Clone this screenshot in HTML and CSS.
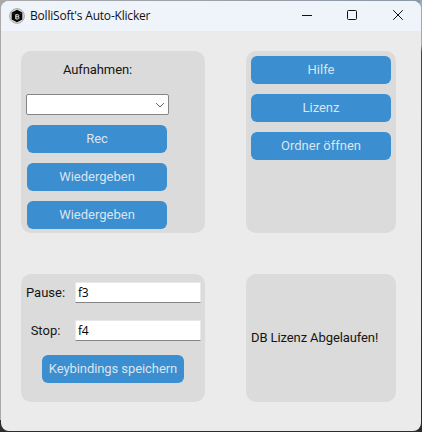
FILE: index.html
```
<!DOCTYPE html>
<html lang="de">
<head>
<meta charset="utf-8">
<title>BolliSoft's Auto-Klicker</title>
<link rel="stylesheet" href="styles.css">
</head>
<body>
<div class="window">
  <header class="titlebar">
    <svg class="logo" width="16" height="16" viewBox="0 0 16 16">
      <circle cx="8" cy="8" r="7.4" fill="#d9d9d9" stroke="#aaa" stroke-width="1"/>
      <path d="M8 1.8 13.3 4.6V11.4L8 14.2 2.7 11.4V4.6Z" fill="#050505"/>
      <path d="M3 5 8 7 13 5" fill="none" stroke="#444" stroke-width=".5"/>
      <path d="M6.8 6.7V11H8.7C10.5 11 10.4 8.9 9 8.8 10.2 8.5 10.1 6.7 8.7 6.7ZM6.8 8.8H9" fill="none" stroke="#eee" stroke-width="1"/>
    </svg>
    <h1 class="title">BolliSoft's Auto-Klicker</h1>
    <svg class="controls" width="112" height="30" viewBox="0 0 112 30" fill="none" stroke="#111" stroke-width="1">
      <path d="M2 14.5H12"/>
      <rect x="47.5" y="9.5" width="9" height="9" rx="1"/>
      <path d="M93.2 9.2 102.8 18.8M102.8 9.2 93.2 18.8"/>
    </svg>
  </header>
  <main class="content">
    <section class="panel recordings">
      <div class="heading">Aufnahmen:</div>
      <div class="combo">
        <svg width="10" height="6" viewBox="0 0 10 6"><path d="M1 1 5 5 9 1" fill="none" stroke="#666" stroke-width="1"/></svg>
      </div>
      <button class="btn">Rec</button>
      <button class="btn">Wiedergeben</button>
      <button class="btn">Wiedergeben</button>
    </section>
    <section class="panel actions">
      <button class="btn">Hilfe</button>
      <button class="btn">Lizenz</button>
      <button class="btn">Ordner öffnen</button>
    </section>
    <section class="panel keys">
      <label class="row"><span class="label">Pause:</span><input class="field" value="f3"></label>
      <label class="row"><span class="label">Stop:</span><input class="field" value="f4"></label>
      <button class="btn save">Keybindings speichern</button>
    </section>
    <section class="panel status">DB Lizenz Abgelaufen!</section>
  </main>
</div>
</body>
</html>
```
FILE: styles.css
```
* { box-sizing: border-box; }
html, body { height: 100%; }
body {
  margin: 0;
  padding: 1px;
  overflow: hidden;
  font: 13px/16px Roboto, sans-serif;
  color: #151515;
  background:
    linear-gradient(#8fb0c2 0 45px, #444 52px, #292b2e) right / 2px 100% no-repeat,
    linear-gradient(90deg, #a9a9a9, #8c98a8) top / 100% 12px no-repeat,
    linear-gradient(#2d2d2d, #2d2d2d) bottom / 100% 12px no-repeat,
    #a9a9a9;
}
.window {
  height: 430px;
  overflow: hidden;
  border-radius: 8px;
  background: #ebebeb;
}
.titlebar {
  display: flex;
  align-items: center;
  height: 30px;
  padding-left: 8px;
  background: #eff3fa;
}
.logo { margin-bottom: 1px; }
.title {
  margin: 0 0 0 5px;
  font: 12px/16px "Open Sans", sans-serif;
  letter-spacing: -.2px;
  color: #111;
}
.controls { margin-left: auto; margin-right: 9px; }
.content {
  display: grid;
  grid-template-columns: 184px 150px;
  grid-template-rows: 182px 128px;
  gap: 41px;
  padding: 20px;
}
.panel { border-radius: 10px; background: #dbdbdb; }
.btn {
  display: block;
  width: 140px;
  height: 28px;
  margin: 0 0 10px;
  padding: 0;
  border: 0;
  border-radius: 6px;
  font: inherit;
  color: #dce4ee;
  background: #3b8ed0;
}
.recordings { padding: 11px 6px 0; }
.heading { width: 141px; height: 32px; text-align: center; letter-spacing: -.1px; }
.combo {
  display: flex;
  align-items: center;
  justify-content: flex-end;
  width: 143px;
  height: 21px;
  margin: 0 0 10px -1px;
  padding-right: 3px;
  border: 1px solid #858585;
  border-radius: 2px;
  background: #fff;
}
.actions { padding: 5px; }
.keys { padding: 8px 4px 0; }
.row { display: flex; align-items: center; height: 21px; margin-bottom: 17px; }
.label { width: 41px; margin-right: 9px; text-align: center; }
.field {
  width: 126px;
  height: 21px;
  padding: 0 2px;
  border: 1px solid #e8e8e8;
  border-bottom-color: #858585;
  border-radius: 1px;
  outline: 0;
  font: 12px/16px "Open Sans", sans-serif;
  letter-spacing: -.3px;
  color: #000;
  background: #fff;
}
.save { width: 142px; margin: -3px 0 0 17px; letter-spacing: -.08px; }
.status { display: flex; align-items: center; padding-left: 5px; letter-spacing: -.1px; }
```
